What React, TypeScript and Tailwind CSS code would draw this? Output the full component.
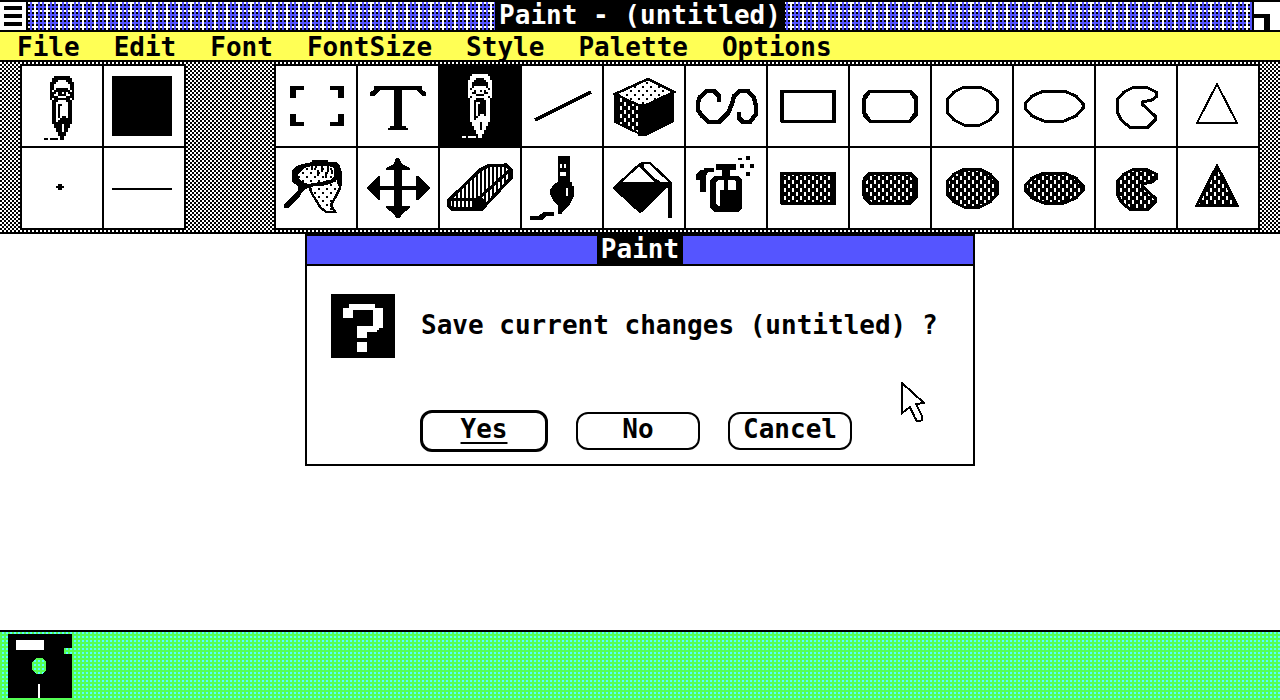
import { useState } from "react";
import type { ReactNode } from "react";

const menus = ["File", "Edit", "Font", "FontSize", "Style", "Palette", "Options"];

// one character per pixel, "#" is ink
const pencilRows = [
  ".....########..",
  "....##########.",
  "....###....###.",
  "...###......###",
  "...##........##",
  "...##........##",
  "...##.######.##",
  "...#.########.#",
  "...###.##.#.###",
  "...##..####..##",
  "...####....####",
  "...#.########.#",
  "....###....###.",
  "....##......##.",
  "....##.##...##.",
  "....##.#....##.",
  "....##.#....##.",
  "....##.#....##.",
  "....##.#....##.",
  "....##.#....##.",
  "....##.#.##.##.",
  "....##..######.",
  "....##.#######.",
  "....##########.",
  ".....####.###..",
  ".....####.###..",
  "......###.##...",
  "......###.##...",
  ".......####....",
  ".......####....",
  "........##.....",
  "##.####.##.....",
];

function Bitmap({ rows, x, y }: { rows: string[]; x: number; y: number }) {
  return (
    <g fill="currentColor">
      {rows.map((row, r) =>
        [...row.matchAll(/#+/g)].map((m) => (
          <rect key={`${r}-${m.index}`} x={x + m.index} y={y + r} width={m[0].length} height={1} />
        ))
      )}
    </g>
  );
}

function Icon({ children }: { children: ReactNode }) {
  return (
    <svg viewBox="0 0 40 40" className="block h-20 w-20" shapeRendering="crispEdges" aria-hidden="true">
      {children}
    </svg>
  );
}

function Patterns() {
  return (
    <svg className="absolute h-0 w-0" aria-hidden="true">
      <defs>
        <pattern id="dense" width="4" height="4" patternUnits="userSpaceOnUse">
          <rect width="4" height="4" fill="#000" />
          <rect x="0" y="0" width="1" height="2" fill="#fff" />
          <rect x="2" y="2" width="1" height="2" fill="#fff" />
        </pattern>
        <pattern id="dots" width="4" height="4" patternUnits="userSpaceOnUse">
          <rect width="4" height="4" fill="#fff" />
          <rect x="1" y="0" width="1" height="1" fill="#000" />
          <rect x="3" y="2" width="1" height="1" fill="#000" />
        </pattern>
        <pattern id="stripes" width="2" height="4" patternUnits="userSpaceOnUse">
          <rect width="2" height="4" fill="#000" />
          <rect x="1" width="1" height="4" fill="#fff" />
        </pattern>
      </defs>
    </svg>
  );
}

const shapes: Record<string, string> = {
  Rectangle: "M7 12.5H33V27.5H7Z",
  "Rounded rectangle": "M10 12.5H30L33 15.5V24.5L30 27.5H10L7 24.5V15.5Z",
  Circle: "M16 10.5H24L29 13L32.5 17V23L29 27L24 29.5H16L11 27L7.5 23V17L11 13Z",
  Ellipse: "M15 12.5H25L31 15L34.5 19V21L31 25L25 27.5H15L9 25L5.5 21V19L9 15Z",
  Freeform:
    "M19 10.5H25L30 13V15.5L28 17L23 18V19L29.5 25V27L26 30.5H17L13 27.5L10.5 23V17L14 13Z",
  Polygon: "M19.5 9L29.5 28.5H9.5Z",
};

function Shape({ name, filled }: { name: string; filled?: boolean }) {
  return (
    <Icon>
      <path
        d={shapes[name]}
        fill={filled ? "url(#dense)" : "none"}
        stroke="currentColor"
        strokeWidth={name === "Polygon" && !filled ? 1 : 1.5}
      />
      {name === "Rectangle" && <path d="M6 12H8V28H6ZM32 12H34V28H32Z" fill="currentColor" />}
      {name === "Rounded rectangle" && (
        <path d="M6 16L10 12V14L8 17V23L10 26V28L6 24ZM34 16L30 12V14L32 17V23L30 26V28L34 24Z" fill="currentColor" />
      )}
    </Icon>
  );
}

const tools: { name: string; icon: ReactNode }[] = [
  {
    name: "Select",
    icon: (
      <Icon>
        <path
          d="M7 10H14V12H10V16H7ZM34 10H27V12H31V16H34ZM7 30H14V28H10V24H7ZM34 30H27V28H31V24H34Z"
          fill="currentColor"
        />
      </Icon>
    ),
  },
  {
    name: "Text",
    icon: (
      <Icon>
        <path
          d="M8 10H32V12L34 13V15H32L29 12H22V30H24V31H25V32H15V31H16V30H18V12H11L8 15H6V13L8 12Z"
          fill="currentColor"
        />
      </Icon>
    ),
  },
  {
    name: "Pencil",
    icon: (
      <Icon>
        <Bitmap rows={pencilRows} x={11} y={4} />
      </Icon>
    ),
  },
  {
    name: "Line",
    icon: (
      <Icon>
        <path d="M6.5 27L34.5 13" stroke="currentColor" strokeWidth="2" />
      </Icon>
    ),
  },
  {
    name: "Cube",
    icon: (
      <Icon>
        <path d="M22 6.5L35 13L19 20.5L5.5 14Z" fill="url(#dots)" stroke="#000" strokeWidth="1.3" />
        <path d="M5.5 14L19 20.5V34.5L5.5 28Z" fill="url(#dense)" stroke="#000" />
        <path d="M5 14H8V29L5 28ZM17 19H20V35H17ZM19 20L35 13V28L21 35H19Z" fill="#000" />
      </Icon>
    ),
  },
  {
    name: "Curve",
    icon: (
      <Icon>
        <path
          d="M16.5 18V15L14 12.5H10.5L7 15.5L6 18V22L8 25L11.5 28H16.5L21 23.5L23 19L24 15L27 12.5H31L34 16L35 20V24L32 28H28.5L26.5 26V23"
          fill="none"
          stroke="currentColor"
          strokeWidth="2.2"
        />
      </Icon>
    ),
  },
  { name: "Rectangle", icon: <Shape name="Rectangle" /> },
  { name: "Rounded rectangle", icon: <Shape name="Rounded rectangle" /> },
  { name: "Circle", icon: <Shape name="Circle" /> },
  { name: "Ellipse", icon: <Shape name="Ellipse" /> },
  { name: "Freeform", icon: <Shape name="Freeform" /> },
  { name: "Polygon", icon: <Shape name="Polygon" /> },
  {
    name: "Scoop",
    icon: (
      <Icon>
        <path d="M16.5 19L18 23L20 26L22 29.5L25 32H29.5L27.5 28.5L30 24L32 20V13L28 17Z" fill="url(#dots)" stroke="#000" strokeWidth="1.2" />
        <path
          d="M8 11L10 9L13 8L18 7V6H26V7H30L32 9L33 12V19H31L30 15L27 18L22 19H17L13 22L12 24L6 30H4V28L11 21V19L8 17Z"
          fill="#000"
        />
        <path d="M11 13L14 10L18 9H26L29 10V14L27 16L22 17L16 18L13 17L11 15Z" fill="url(#dots)" />
        <path d="M20 8V10M23 9V12M26 9V12M21 11V14M25 12V15M28 11V13M18 9V11" stroke="#000" />
      </Icon>
    ),
  },
  {
    name: "Scroll",
    icon: (
      <Icon>
        <path
          d="M20 5L21 6L22 8L26 10V11H22V19H29V14H30L36 20L30 26H29V21H22V29H26V30L22 33L21 35H19L18 33L14 30V29H18V21H11V26H10L4 20L10 14H11V19H18V11H14V10L18 8L19 5Z"
          fill="currentColor"
        />
      </Icon>
    ),
  },
  {
    name: "Eraser",
    icon: (
      <Icon>
        <path d="M4.5 26L20 11L24 9L33 8.5L35.5 11V15L21 30.5H6L4.5 29Z" fill="url(#stripes)" stroke="#000" strokeWidth="1.6" />
        <path d="M5 25.5H19L35 11" fill="none" stroke="#000" strokeWidth="1.5" />
        <path d="M17 26L21 25L24 28L21 31H17Z" fill="#000" />
      </Icon>
    ),
  },
  {
    name: "Brush",
    icon: (
      <Icon>
        <path
          d="M18 4H24V17H25V19H26V24L24 28L20 32V33H18V29L16 27L14 23V21L16 18L18 17ZM4 34H8L11 32H16V34H12L10 36H4Z"
          fill="#000"
        />
        <path d="M19 8H20V10H19ZM21 8H22V10H21ZM19 12H22V14H19ZM22 20H23V24H22Z" fill="#fff" />
      </Icon>
    ),
  },
  {
    name: "Fill",
    icon: (
      <Icon>
        <path d="M5 20L18 8L20 7.5H23L33 17L31 19L18 32Z" fill="#fff" stroke="#000" strokeWidth="1.2" />
        <path d="M5 20L8 17H34V35H32V20H31L19 32H17Z" fill="#000" />
        <path d="M18 8H20V10L25 15L28 16.5V17H25L20 12L17 9Z" fill="#000" />
      </Icon>
    ),
  },
  {
    name: "Spray",
    icon: (
      <Icon>
        <path
          d="M5 13L7 11H9V10H14V12H11L10 14V22H7V16H5ZM15 8H25V11H22V14H26L28 16V30L26 32H14L12 30V16L14 14H18V11H15ZM26 5H28V6H26ZM30 4H32V6H30ZM27 8H29V10H27ZM32 8H34V10H32ZM30 12H32V14H30Z"
          fill="#000"
        />
        <path d="M16 16H19V21H17V29H16L15 28V17ZM21 16H24L25 17V21H21Z" fill="#fff" />
      </Icon>
    ),
  },
  { name: "Filled rectangle", icon: <Shape name="Rectangle" filled /> },
  { name: "Filled rounded rectangle", icon: <Shape name="Rounded rectangle" filled /> },
  { name: "Filled circle", icon: <Shape name="Circle" filled /> },
  { name: "Filled ellipse", icon: <Shape name="Ellipse" filled /> },
  { name: "Filled freeform", icon: <Shape name="Freeform" filled /> },
  { name: "Filled polygon", icon: <Shape name="Polygon" filled /> },
];

const status: { name: string; icon: ReactNode }[] = [
  {
    name: "Current tool",
    icon: (
      <Icon>
        <Bitmap rows={pencilRows} x={11} y={5} />
      </Icon>
    ),
  },
  {
    name: "Current pattern",
    icon: (
      <Icon>
        <path d="M4 5H34V35H4Z" />
      </Icon>
    ),
  },
  {
    name: "Brush shape",
    icon: (
      <Icon>
        <path d="M18 18H20V19H21V20H20V21H18V20H17V19H18Z" />
      </Icon>
    ),
  },
  {
    name: "Line width",
    icon: (
      <Icon>
        <path d="M4 20H34V21H4Z" />
      </Icon>
    ),
  },
];

function TitleBar() {
  return (
    <header className="flex h-8 border-y-2 border-black bg-white">
      <button aria-label="System menu" className="flex w-7 flex-col gap-1 border-r-2 border-black pt-1 pl-1">
        <span className="h-1 w-[18px] bg-black" />
        <span className="h-1 w-[18px] bg-black" />
        <span className="h-1 w-[18px] bg-black" />
      </button>
      <div className="flex flex-1 justify-center [background:repeating-linear-gradient(90deg,transparent_0_2px,#55f_2px_4px,transparent_4px_6px,#fff_6px_8px,transparent_8px_10px,#55f_10px_12px),repeating-linear-gradient(#fff_0_2px,#000_2px_4px,#55f_4px_6px,#000_6px_8px)]">
        <h1 className="bg-black px-1 leading-[26px] text-white">Paint - (untitled)</h1>
      </div>
      <button aria-label="Size box" className="flex w-7 items-end border-l-2 border-black">
        <span className="h-4 w-4 border-t-4 border-r-6 border-black" />
      </button>
    </header>
  );
}

function ToolGrid({
  items,
  columns,
  selected,
  onPick,
}: {
  items: { name: string; icon: ReactNode }[];
  columns: string;
  selected?: string;
  onPick?: (name: string) => void;
}) {
  return (
    <div className={`grid gap-[2px] border-2 border-black bg-black ${columns}`}>
      {items.map((item) => (
        <button
          key={item.name}
          aria-label={item.name}
          aria-pressed={selected === item.name}
          onClick={() => onPick?.(item.name)}
          className={selected === item.name ? "bg-black text-white" : "bg-white text-black"}
        >
          {item.icon}
        </button>
      ))}
    </div>
  );
}

function SaveDialog() {
  return (
    <section
      role="dialog"
      aria-labelledby="dialog-title"
      className="relative mx-auto w-[670px] max-w-full border-2 border-black bg-white"
    >
      <div className="flex h-[30px] justify-center border-b-2 border-black bg-[#5555ff]">
        <h2 id="dialog-title" className="bg-black px-1 leading-[26px] text-white">
          Paint
        </h2>
      </div>
      <div className="flex items-center gap-[26px] px-6 pt-7">
        <svg viewBox="0 0 32 32" className="h-16 w-16 shrink-0 bg-black" shapeRendering="crispEdges" aria-hidden="true">
          <path
            d="M9 5H22V7H26V17H24V18H23V19H18V22H13V16H21V8H11V12H6V7H9ZM13 24H18V29H13Z"
            fill="#fff"
          />
        </svg>
        <p className="pb-[2px] leading-8 whitespace-nowrap">Save current changes (untitled) ?</p>
      </div>
      <div className="flex items-center justify-center gap-7 pt-[52px] pr-2 pb-3">
        <button className="h-[42px] w-32 rounded-xl border-3 border-black pb-1 leading-8 underline decoration-2 underline-offset-4">
          Yes
        </button>
        <button className="h-[38px] w-[124px] rounded-xl border-2 border-black pb-1 leading-7">No</button>
        <button className="h-[38px] w-[124px] rounded-xl border-2 border-black pb-1 leading-7">Cancel</button>
      </div>
      <svg viewBox="0 0 12 20" className="absolute top-[146px] right-12 h-10 w-6" shapeRendering="crispEdges" aria-hidden="true">
        <path
          d="M0.5 0.5L11.5 10.5L7.5 11L10.5 17V19L9.5 19.5H8L7 18L4.5 12.5L0.5 15.5Z"
          fill="#fff"
          stroke="#000"
        />
      </svg>
    </section>
  );
}

export default function App() {
  const [tool, setTool] = useState("Pencil");

  return (
    <div className="flex min-h-screen flex-col overflow-hidden bg-white font-['DejaVu_Sans_Mono','Liberation_Mono',monospace] text-[26px] font-bold text-black">
      <Patterns />
      <TitleBar />
      <nav className="flex h-[30px] border-b-2 border-black bg-[#ffff55]">
        {menus.map((menu) => (
          <button key={menu} className="px-[17px] pt-[2px] leading-[26px]">
            {menu}
          </button>
        ))}
      </nav>
      <div className="flex justify-between border-b-2 border-black bg-[conic-gradient(#000_25%,#fff_0_50%,#000_0_75%,#fff_0)] bg-[length:4px_4px] px-5 py-[2px]">
        <ToolGrid items={status} columns="grid-cols-2" />
        <ToolGrid items={tools} columns="grid-cols-12" selected={tool} onPick={setTool} />
      </div>
      <main className="flex-1">
        <SaveDialog />
      </main>
      <footer className="border-t-2 border-black bg-[#55ff55] bg-[conic-gradient(#5ff_25%,transparent_0)] bg-[length:4px_4px] px-2 py-[2px]">
        <button aria-label="Disk" className="block">
          <svg viewBox="0 0 32 32" className="block h-16 w-16" shapeRendering="crispEdges" aria-hidden="true">
            <path d="M0 0H32V7H28V10H32V32H0ZM14 12L12 14V18L14 20H17L19 18V14L17 12Z" fillRule="evenodd" />
            <path d="M4 3H18V8H4ZM15 25H16V32H15Z" fill="#fff" />
          </svg>
        </button>
      </footer>
    </div>
  );
}
